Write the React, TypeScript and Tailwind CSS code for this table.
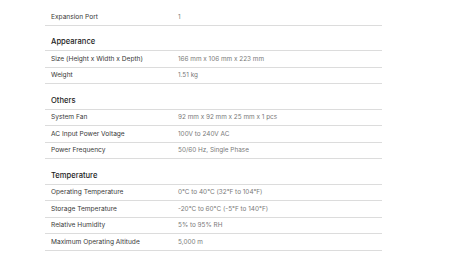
import React from "react";

type Row = [string, string];
const sections: { title?: string; rows: Row[] }[] = [
  { rows: [["Expansion Port", "1"]] },
  {
    title: "Appearance",
    rows: [
      ["Size (Height x Width x Depth)", "166 mm x 106 mm x 223 mm"],
      ["Weight", "1.51 kg"],
    ],
  },
  {
    title: "Others",
    rows: [
      ["System Fan", "92 mm x 92 mm x 25 mm x 1 pcs"],
      ["AC Input Power Voltage", "100V to 240V AC"],
      ["Power Frequency", "50/60 Hz, Single Phase"],
    ],
  },
  {
    title: "Temperature",
    rows: [
      ["Operating Temperature", "0°C to 40°C (32°F to 104°F)"],
      ["Storage Temperature", "-20°C to 60°C (-5°F to 140°F)"],
      ["Relative Humidity", "5% to 95% RH"],
      ["Maximum Operating Altitude", "5,000 m"],
    ],
  },
];

export default function App() {
  return (
    <div
      className="w-[469px] h-[271px] bg-white overflow-hidden pt-[9px] pl-[45px]"
      style={{ fontFamily: "Inter, 'Liberation Sans', sans-serif" }}
    >
      <div className="w-[337px]">
        {sections.map((s, i) => (
          <div key={i}>
            {s.title && (
              <div className="h-[25.5px] flex items-end pb-[3px] pl-[6px] border-b border-[#dcdcdc] text-[7.6px] leading-[11px] font-medium text-[#222]">
                {s.title}
              </div>
            )}
            {s.rows.map(([k, v]) => (
              <div
                key={k}
                className="h-[16.5px] flex items-center pt-[1px] border-b border-[#dcdcdc] text-[6.4px] leading-[9px]"
              >
                <div className="w-[133px] pl-[6px] text-[6.6px] font-normal text-[#383838]">{k}</div>
                <div className="text-[#7a7a7a]">{v}</div>
              </div>
            ))}
          </div>
        ))}
      </div>
    </div>
  );
}
